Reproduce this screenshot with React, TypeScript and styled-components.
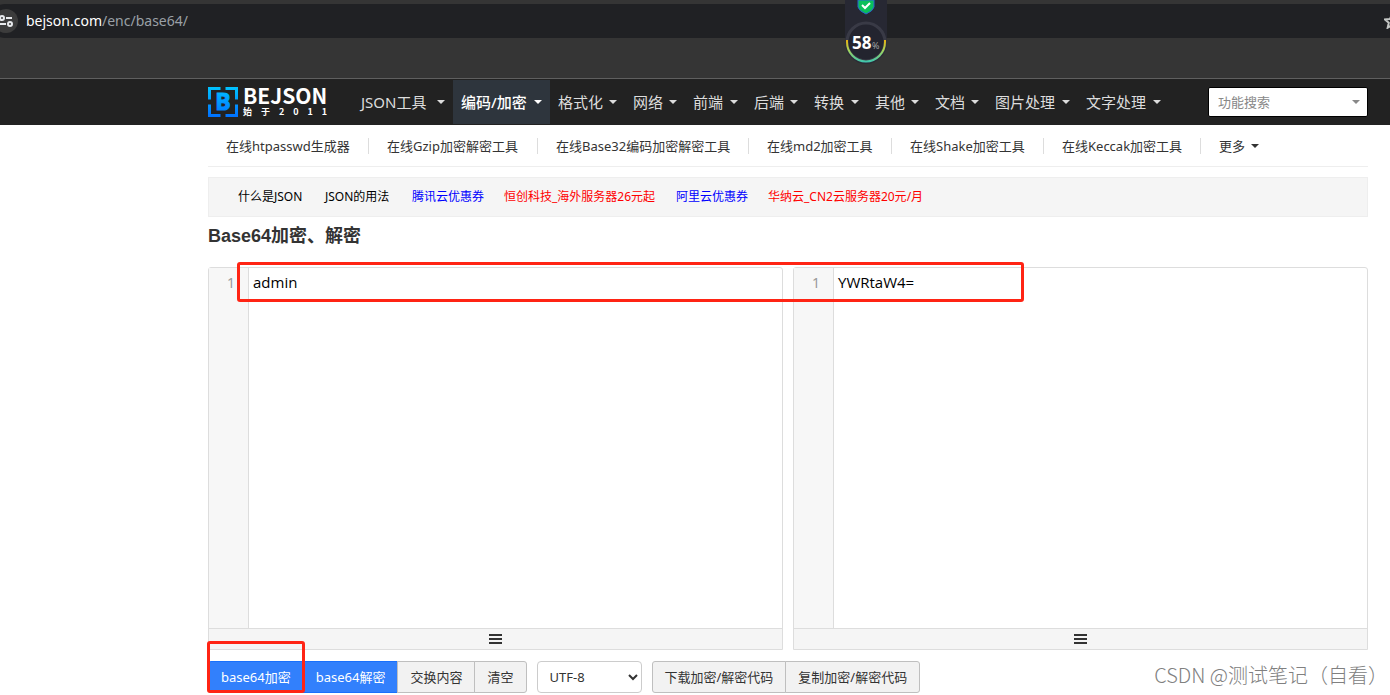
import React from "react";
import styled, { createGlobalStyle, css } from "styled-components";

const sans = `"Noto Sans", "Noto Sans CJK SC", sans-serif`;

const GlobalStyle = createGlobalStyle`
  *, *::before, *::after { box-sizing: border-box; }
  body {
    margin: 0;
    background: #fff;
    color: #333;
    font-family: ${sans};
    font-size: 13px;
    line-height: 20px;
    overflow: hidden;
  }
  a { color: inherit; text-decoration: none; }
  button, select, input, textarea { font: inherit; color: inherit; }
`;

const Screen = styled.div`
  position: relative;
  overflow: hidden;
`;

/* ---------- browser chrome ---------- */

const Chrome = styled.div`
  height: 79px;
  padding-top: 4px;
  background: #353535;
  border-bottom: 1px solid #5f5f5f;
`;

const AddressBar = styled.div`
  display: flex;
  align-items: center;
  justify-content: space-between;
  height: 34px;
  overflow: hidden;
  background: #202124;
  border-radius: 17px 0 0 17px;
  margin-left: -12px;
`;

const AddressMain = styled.div`
  display: flex;
  align-items: center;
  gap: 8px;
  padding-left: 6px;
`;

const Url = styled.span`
  font-size: 14px;
  line-height: 20px;
  color: #9aa0a6;
`;

const UrlHost = styled.span`
  color: #fff;
`;

const StarClip = styled.div`
  width: 6px;
  height: 16px;
  overflow: hidden;
`;

/* ---------- floating monitor ---------- */

const Monitor = styled.div`
  position: absolute;
  top: 0;
  left: 845px;
  width: 42px;
  height: 66px;
`;

/* ---------- site header ---------- */

const Header = styled.header`
  display: flex;
  align-items: center;
  height: 46px;
  padding: 0 22px 0 208px;
  background: #222;
`;

const LogoLink = styled.a`
  display: flex;
  align-items: center;
  gap: 5px;
  width: 119px;
  flex: none;

  svg {
    flex: none;
    overflow: visible;
  }
`;

const Wordmark = styled.span`
  display: flex;
  flex-direction: column;
  flex: 1;
  min-width: 0;
  color: #fff;
`;

const Brand = styled.span`
  font: 700 21px/20px "Noto Sans CJK SC", sans-serif;
`;

const Since = styled.span`
  display: flex;
  justify-content: space-between;
  font: 700 9px/14px "Noto Sans CJK SC", sans-serif;
`;

const Nav = styled.nav`
  display: flex;
  flex: 1;
  margin-left: 26px;
`;

const NavItem = styled.a<{ $active?: boolean; $width: number }>`
  display: flex;
  align-items: center;
  justify-content: space-between;
  flex: none;
  width: ${(p) => p.$width}px;
  height: 44px;
  padding: 0 8px;
  font-size: 15px;
  color: #ddd;
  white-space: nowrap;
  ${(p) =>
    p.$active &&
    css`
      color: #fff;
      background: #2e353d;
      font-weight: 500;
    `}
`;

const Caret = styled.span`
  border: 4px solid transparent;
  border-top-color: currentColor;
  border-bottom: 0;
`;

const Search = styled.label`
  position: relative;
  width: 160px;
  flex: none;
  color: #888;
`;

const SearchSelect = styled.select`
  display: block;
  width: 100%;
  height: 30px;
  padding: 0 9px;
  appearance: none;
  background: #fff;
  border: 1px solid #000;
  border-radius: 2px;
`;

const SearchCaret = styled(Caret)`
  position: absolute;
  top: 13px;
  right: 8px;
  pointer-events: none;
`;

/* ---------- page ---------- */

const Page = styled.main`
  position: relative;
  padding: 0 22px 2px 208px;
`;

const SubNav = styled.nav`
  display: flex;
  align-items: center;
  height: 42px;
  border-bottom: 1px solid #eee;
`;

const SubItem = styled.a<{ $width: number }>`
  display: flex;
  align-items: center;
  gap: 6px;
  flex: none;
  width: ${(p) => p.$width}px;
  height: 16px;
  padding-left: 18px;
  white-space: nowrap;
  border-right: 1px solid #ddd;
  &:last-child { border-right: 0; }
`;

const Promo = styled.div`
  display: flex;
  align-items: center;
  height: 40px;
  margin-top: 10px;
  padding: 0 29px;
  font-size: 12px;
  background: #f5f5f5;
  border: 1px solid #eee;
`;

const PromoLink = styled.a<{ $color: string; $width: number }>`
  flex: none;
  width: ${(p) => p.$width}px;
  color: ${(p) => p.$color};
  white-space: nowrap;
`;

const Title = styled.h1`
  margin: 8px 0 20px;
  font: 700 18px/22px "Liberation Sans", "Noto Sans CJK SC", sans-serif;
`;

const Editors = styled.div`
  position: relative;
  display: grid;
  grid-template-columns: 1fr 1fr;
  gap: 10px;
`;

const Editor = styled.section`
  border: 1px solid #ddd;
  border-radius: 3px 3px 0 0;
`;

const EditorBody = styled.div`
  display: flex;
  height: 360px;
`;

const Gutter = styled.div`
  flex: none;
  width: 40px;
  padding: 5px 13px 0 0;
  text-align: right;
  font-size: 14px;
  color: #999;
  background: #f7f7f7;
  border-right: 1px solid #ddd;
`;

const Code = styled.textarea`
  flex: 1;
  min-width: 0;
  padding: 4px;
  font-family: "Open Sans", "Noto Sans CJK SC", sans-serif;
  font-size: 15px;
  line-height: 20px;
  color: #000;
  background: transparent;
  border: 0;
  outline: 0;
  resize: none;
`;

const Grip = styled.div`
  display: flex;
  align-items: center;
  justify-content: center;
  height: 21px;
  background: #f5f5f5;
  border-top: 1px solid #ddd;
`;

const Toolbar = styled.div`
  position: relative;
  display: flex;
  gap: 10px;
  margin-top: 11px;
`;

const Group = styled.div`
  display: flex;
`;

const Button = styled.button<{ $primary?: boolean }>`
  height: 32px;
  padding: 0 12px;
  white-space: nowrap;
  color: ${(p) => (p.$primary ? "#fff" : "#333")};
  background: ${(p) => (p.$primary ? "#3280fc" : "#f2f2f2")};
  border: 1px solid ${(p) => (p.$primary ? "#1970fc" : "#bfbfbf")};
  & + & { margin-left: -1px; }
  &:first-child { border-radius: 3px 0 0 3px; }
  &:last-child { border-radius: 0 3px 3px 0; }
`;

const Charset = styled.select`
  width: 105px;
  height: 32px;
  padding: 0 0 0 8px;
  background: #fff;
  border: 1px solid #ccc;
  border-radius: 4px;
`;

const Mark = styled.div`
  position: absolute;
  border: 3px solid #ff2414;
  border-radius: 3px;
  pointer-events: none;
`;

const ValueMark = styled(Mark)`
  top: -5px;
  left: 29px;
  width: 787px;
  height: 40px;
`;

const ButtonMark = styled(Mark)`
  top: -20px;
  left: -1px;
  width: 98px;
  height: 52px;
`;

const Watermark = styled.div`
  position: absolute;
  right: 2px;
  bottom: 6px;
  font: 300 20px/28px "Noto Sans CJK SC", sans-serif;
  color: #808080;
  white-space: nowrap;
`;

const navItems = [
  { label: "JSON工具", width: 100 },
  { label: "编码/加密", width: 97, active: true },
  { label: "格式化", width: 75 },
  { label: "网络", width: 60 },
  { label: "前端", width: 61 },
  { label: "后端", width: 60 },
  { label: "转换", width: 61 },
  { label: "其他", width: 60 },
  { label: "文档", width: 60 },
  { label: "图片处理", width: 91 },
  { label: "文字处理", width: 91 },
];

const subItems = [
  { label: "在线htpasswd生成器", width: 161 },
  { label: "在线Gzip加密解密工具", width: 169 },
  { label: "在线Base32编码加密解密工具", width: 211 },
  { label: "在线md2加密工具", width: 143 },
  { label: "在线Shake加密工具", width: 152 },
  { label: "在线Keccak加密工具", width: 157 },
];

const promos = [
  { label: "什么是JSON", color: "#000", width: 87 },
  { label: "JSON的用法", color: "#000", width: 87 },
  { label: "腾讯云优惠券", color: "#00f", width: 92 },
  { label: "恒创科技_海外服务器26元起", color: "#f00", width: 172 },
  { label: "阿里云优惠券", color: "#00f", width: 92 },
  { label: "华纳云_CN2云服务器20元/月", color: "#f00", width: 172 },
];

const SiteIcon = () => (
  <svg width="24" height="24" viewBox="0 0 24 24" fill="none" stroke="#e8eaed" strokeWidth="2">
    <circle cx="12" cy="12" r="12" fill="#3c3c3c" stroke="none" />
    <circle cx="8" cy="9" r="2" />
    <path d="M12 9h6M6 15h6" />
    <circle cx="16" cy="15" r="2" />
  </svg>
);

const MonitorArt = () => (
  <svg width="42" height="66" viewBox="0 0 42 66">
    <defs>
      <linearGradient id="ring" gradientUnits="userSpaceOnUse" x1="0" y1="40" x2="0" y2="63">
        <stop offset="0" stopColor="#e8b010" />
        <stop offset="0.450" stopColor="#a5d65a" />
        <stop offset="1" stopColor="#35c4b5" />
      </linearGradient>
    </defs>
    <path d="M0 0h42v38H0z" fill="#272833" />
    <circle cx="21" cy="43" r="21" fill="#2b2c35" />
    <circle cx="21" cy="42" r="19" fill="#23242f" stroke="#393a46" strokeWidth="3" />
    <path d="M2 40v2a19 19.500 0 0 0 38 0v-2" fill="none" stroke="url(#ring)" strokeWidth="2" />
    <path d="M13 0h16v7q-1 4-8 7q-7-3-8-7z" fill="#0abf5b" stroke="#2a62d0" strokeWidth="1" />
    <path d="M17 5l3 3 5-5" fill="none" stroke="#fff" strokeWidth="2" />
    <text x="7" y="49" fill="#fff" fontFamily="Open Sans, sans-serif" fontWeight="700" fontSize="17">58</text>
    <text x="27" y="49" fill="#aaa" fontFamily="Open Sans, sans-serif" fontSize="9">%</text>
  </svg>
);

const LogoMark = () => (
  <svg width="30" height="30" viewBox="0 0 30 30">
    <defs>
      <linearGradient id="logo" gradientUnits="userSpaceOnUse" x1="0" y1="0" x2="0" y2="30">
        <stop offset="0" stopColor="#00c3ff" />
        <stop offset="1" stopColor="#0070ff" />
      </linearGradient>
    </defs>
    <path
      d="M1.500 12.500V1.500H12.500M17.500 1.500h11V12.500M1.500 17.500v11H12.500M17.500 28.500h11V17.500"
      fill="none"
      stroke="url(#logo)"
      strokeWidth="3"
    />
    <text
      x="15"
      y="23"
      textAnchor="middle"
      fill="url(#logo)"
      stroke="url(#logo)"
      strokeWidth="1"
      fontFamily="Open Sans, sans-serif"
      fontWeight="700"
      fontSize="23"
    >
      B
    </text>
  </svg>
);

const Bars = () => (
  <svg width="13" height="11" viewBox="0 0 13 11" fill="#333">
    <path d="M0 0h13v2H0zM0 4h13v2H0zM0 8h13v2H0z" />
  </svg>
);

const EditorPane = ({ name, value }: { name: string; value: string }) => (
  <Editor>
    <EditorBody>
      <Gutter>1</Gutter>
      <Code aria-label={name} defaultValue={value} spellCheck={false} />
    </EditorBody>
    <Grip>
      <Bars />
    </Grip>
  </Editor>
);

export default function App() {
  return (
    <Screen>
      <GlobalStyle />
      <Chrome>
        <AddressBar>
          <AddressMain>
            <SiteIcon />
            <Url>
              <UrlHost>bejson.com</UrlHost>/enc/base64/
            </Url>
          </AddressMain>
          <StarClip>
            <svg width="16" height="16" viewBox="0 0 16 16" fill="none" stroke="#c4c7c5" strokeWidth="2">
              <path d="M8 1.500l2 4.500 5 .5-3.800 3.300 1.100 4.900L8 12.200l-4.300 2.500 1.100-4.900L1 6.500 6 6z" />
            </svg>
          </StarClip>
        </AddressBar>
      </Chrome>

      <Header>
        <LogoLink href="#" aria-label="BEJSON">
          <LogoMark />
          <Wordmark>
            <Brand>BEJSON</Brand>
            <Since>
              {["始", "于", "2", "0", "1", "1"].map((c, i) => (
                <span key={i}>{c}</span>
              ))}
            </Since>
          </Wordmark>
        </LogoLink>
        <Nav>
          {navItems.map((item) => (
            <NavItem key={item.label} href="#" $active={item.active} $width={item.width}>
              {item.label}
              <Caret />
            </NavItem>
          ))}
        </Nav>
        <Search>
          <SearchSelect aria-label="功能搜索">
            <option>功能搜索</option>
          </SearchSelect>
          <SearchCaret />
        </Search>
      </Header>

      <Page>
        <SubNav>
          {subItems.map((item) => (
            <SubItem key={item.label} href="#" $width={item.width}>
              {item.label}
            </SubItem>
          ))}
          <SubItem href="#" $width={70}>
            更多
            <Caret />
          </SubItem>
        </SubNav>

        <Promo>
          {promos.map((p) => (
            <PromoLink key={p.label} href="#" $color={p.color} $width={p.width}>
              {p.label}
            </PromoLink>
          ))}
        </Promo>

        <Title>Base64加密、解密</Title>

        <Editors>
          <EditorPane name="输入" value="admin" />
          <EditorPane name="结果" value="YWRtaW4=" />
          <ValueMark />
        </Editors>

        <Toolbar>
          <Group>
            <Button $primary>base64加密</Button>
            <Button $primary>base64解密</Button>
            <Button>交换内容</Button>
            <Button>清空</Button>
          </Group>
          <Charset aria-label="字符集">
            <option>UTF-8</option>
          </Charset>
          <Group>
            <Button>下载加密/解密代码</Button>
            <Button>复制加密/解密代码</Button>
          </Group>
          <ButtonMark />
        </Toolbar>
        <Watermark>CSDN @测试笔记（自看）</Watermark>
      </Page>
      <Monitor>
        <MonitorArt />
      </Monitor>
    </Screen>
  );
}
